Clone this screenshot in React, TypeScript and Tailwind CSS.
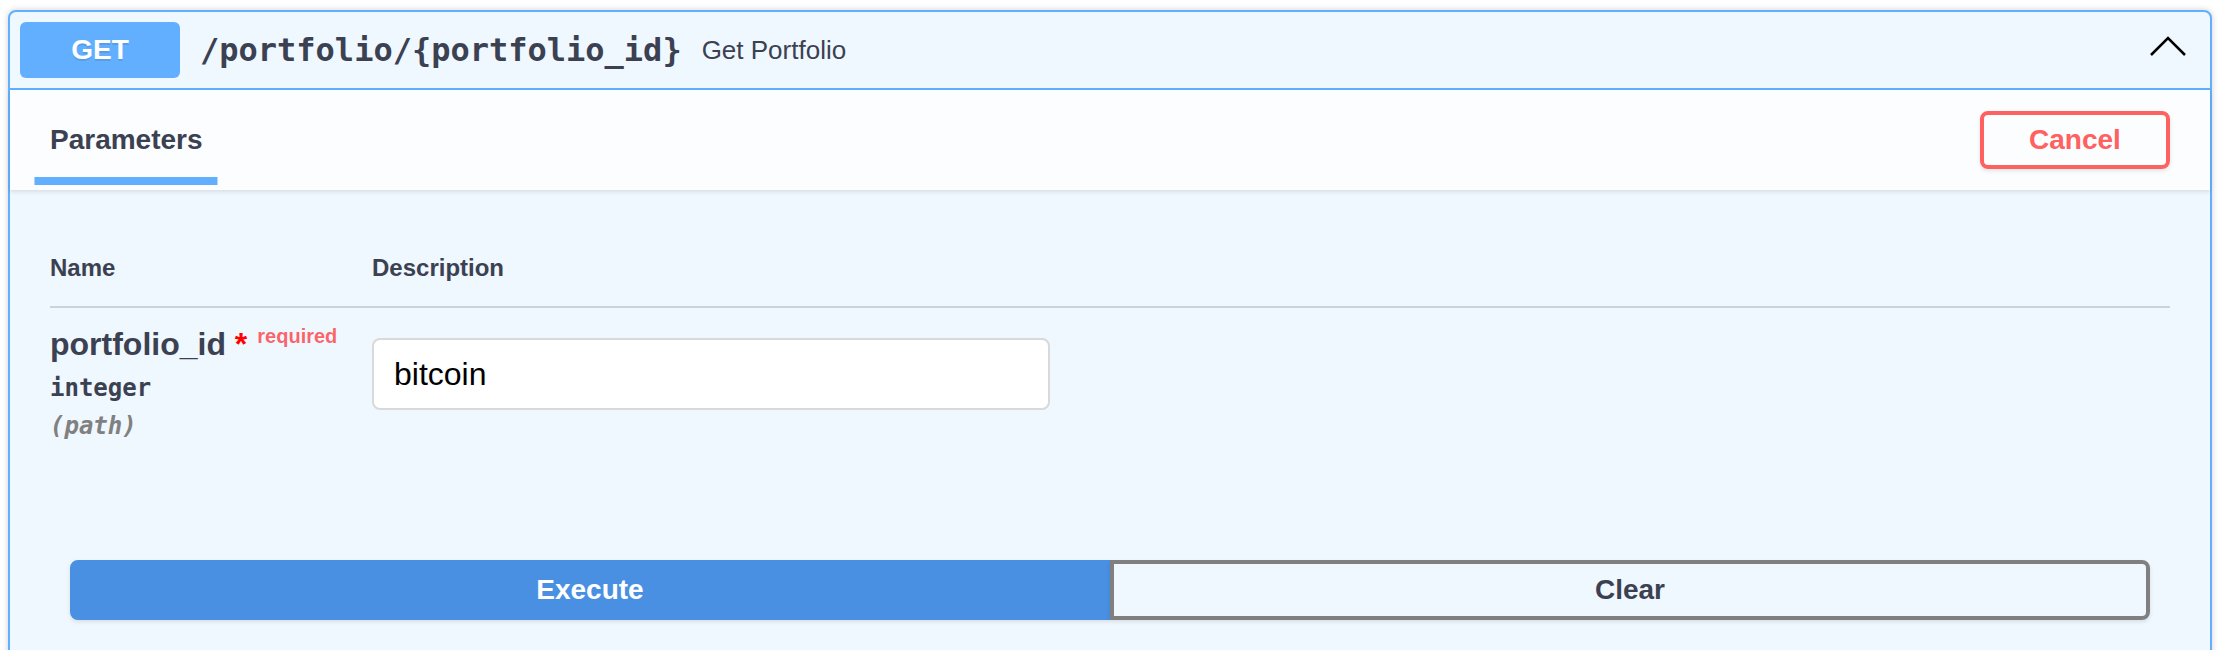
const ChevronUp = () => (
  <svg width="40" height="40" viewBox="0 0 40 40" className="mr-[12px] shrink-0" aria-hidden="true">
    <polyline points="3,25 20,8 37,25" fill="none" stroke="#000" strokeWidth="2.5" />
  </svg>
);

const App = () => {
  return (
    <div className="h-[650px] overflow-hidden bg-white pt-[10px] pl-[8px] font-['Liberation_Sans',Arial,sans-serif] text-[#3b4151]">
      <div className="w-[2204px] rounded-t-[8px] border-2 border-[#61affe] bg-[#eff7ff] shadow-[0_0_6px_rgba(0,0,0,0.19)] pb-[120px]">
        {/* summary */}
        <div className="flex items-center p-[10px] border-b-2 border-[#61affe]">
          <span className="flex h-[56px] w-[160px] items-center justify-center rounded-[6px] bg-[#61affe] text-[28px] font-bold text-white [text-shadow:0_2px_0_rgba(0,0,0,0.1)]">
            GET
          </span>
          <span className="px-[20px] font-['DejaVu_Sans_Mono',monospace] text-[32px] font-semibold leading-[40px]">
            /portfolio/&#123;portfolio_id&#125;
          </span>
          <span className="flex-1 text-[26px]">Get Portfolio</span>
          <ChevronUp />
        </div>

        {/* section header */}
        <div className="flex h-[100px] items-center justify-between bg-white/80 px-[40px] shadow-[0_2px_4px_rgba(0,0,0,0.1)]">
          <h4 className="text-[28px] font-bold leading-[32px]">
            <span className="relative">
              Parameters
              <span className="absolute bottom-[-30px] left-1/2 h-[8px] w-[120%] -translate-x-1/2 bg-[#61affe]" />
            </span>
          </h4>
          <button className="flex h-[58px] w-[190px] items-center justify-center rounded-[8px] border-4 border-[#ff6060] text-[28px] font-bold text-[#ff6060] shadow-[0_2px_4px_rgba(0,0,0,0.1)]">
            Cancel
          </button>
        </div>

        {/* parameters table */}
        <div className="px-[40px] pt-[40px] pb-[40px]">
          <div className="flex border-b-2 border-[rgba(59,65,81,0.2)] py-[24px] text-[24px] font-bold leading-[28px]">
            <div className="w-[322px]">Name</div>
            <div>Description</div>
          </div>
          <div className="flex py-[20px]">
            <div className="w-[322px]">
              <div className="text-[32px] font-bold leading-[32px]">
                portfolio_id
                <span className="text-[#ff0000]">&nbsp;*</span>
                <span className="relative top-[-12px] pl-[10px] text-[20px] text-[rgba(255,0,0,0.6)]">required</span>
              </div>
              <div className="py-[10px] font-['DejaVu_Sans_Mono',monospace] text-[24px] font-semibold leading-[28px]">
                integer
              </div>
              <div className="font-['DejaVu_Sans_Mono',monospace] text-[24px] font-semibold italic leading-[28px] text-[#808080]">
                (path)
              </div>
            </div>
            <div>
              <input
                type="text"
                defaultValue="bitcoin"
                className="mt-[10px] h-[72px] w-[678px] rounded-[8px] border-2 border-[#d9d9d9] bg-white px-[20px] text-[32px] text-black outline-none"
              />
            </div>
          </div>
        </div>

        {/* execute */}
        <div className="flex px-[60px] pt-[60px]">
          <button className="h-[60px] flex-1 rounded-l-[8px] border-4 border-[#4990e2] bg-[#4990e2] text-[28px] font-bold text-white shadow-[0_2px_4px_rgba(0,0,0,0.1)]">
            Execute
          </button>
          <button className="h-[60px] flex-1 rounded-r-[8px] border-4 border-[#808080] bg-transparent text-[28px] font-bold text-[#3b4151] shadow-[0_2px_4px_rgba(0,0,0,0.1)]">
            Clear
          </button>
        </div>
      </div>
    </div>
  );
};

export default App;
